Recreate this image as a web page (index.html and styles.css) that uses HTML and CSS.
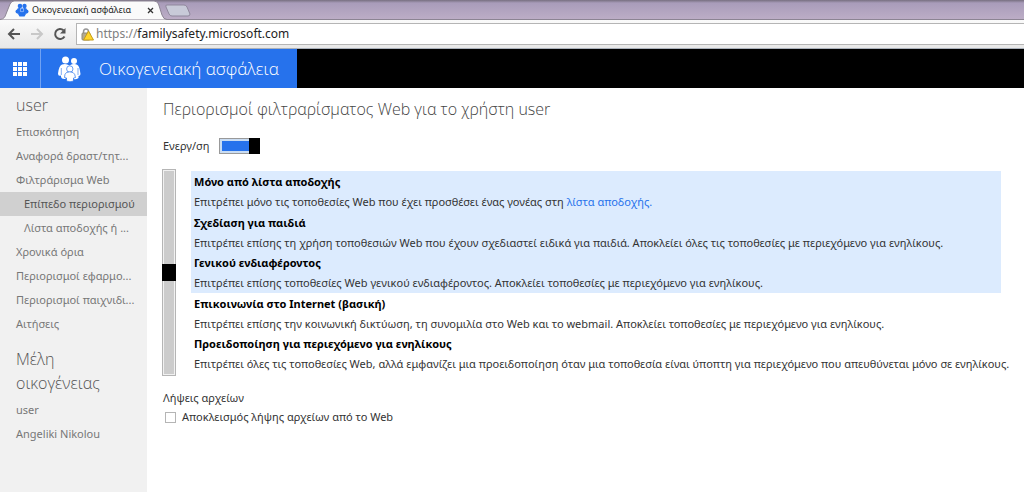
FILE: index.html
```html
<!DOCTYPE html>
<html lang="el">
<head>
<meta charset="utf-8">
<title>Οικογενειακή ασφάλεια</title>
<link rel="stylesheet" href="styles.css">
</head>
<body>
<div class="browser">
  <div class="tabstrip">
    <svg class="tab-shape" width="192" height="20" viewBox="0 0 192 20" aria-hidden="true">
      <path d="M0 19.500C4 19 5 17 6 14L10 4Q11.500 1 14 1H154Q157 1 158.500 4L162 15Q163.500 19.500 167 19.500V20H0Z" fill="#fafafa" stroke="#8c8493"/>
      <path d="M167 5H184Q186 5 187 7L190 14Q190 16 188 16H172Q170 16 169 14L166 7Q165 5 167 5Z" fill="#c8cad8" stroke="#8f879c"/>
    </svg>
    <div class="tab">
      <svg width="14" height="14" viewBox="0 0 14 14" aria-hidden="true" fill="#2672ec">
        <circle cx="5" cy="3" r="2.300"/><circle cx="9.500" cy="3" r="2.200"/>
        <rect x="2" y="5" width="10" height="6" rx="2"/>
        <circle cx="2.500" cy="8.500" r="2"/><circle cx="11.500" cy="8.500" r="2"/>
        <circle cx="7" cy="7" r="2.200" fill="#a9c8ff"/><circle cx="7" cy="7" r="1.500"/>
        <path d="M3 11Q7 8 11 11L9.500 13.500H4.500Z"/>
      </svg>
      <span class="tab-title">Οικογενειακή ασφάλεια</span>
      <button class="tab-close" aria-label="Κλείσιμο">
        <svg width="7" height="7" viewBox="0 0 7 7"><path d="M1 1L6 6M6 1L1 6" stroke="#333" stroke-width="1.300"/></svg>
      </button>
    </div>
  </div>
  <div class="toolbar">
    <button class="nav-button" aria-label="Πίσω">
      <svg width="14" height="12" viewBox="0 0 14 12" fill="none" stroke="#555" stroke-width="2"><path d="M13 6H2M7 1L2 6L7 11"/></svg>
    </button>
    <button class="nav-button" aria-label="Εμπρός">
      <svg width="14" height="12" viewBox="0 0 14 12" fill="none" stroke="#c8c8c8" stroke-width="2"><path d="M1 6H12M7 1L12 6L7 11"/></svg>
    </button>
    <button class="nav-button" aria-label="Ανανέωση">
      <svg width="14" height="14" viewBox="0 0 14 14"><path d="M11.500 9.500A5 5 0 1 1 10.500 3.300" fill="none" stroke="#555" stroke-width="2"/><path d="M12.500 1V6.500H7Z" fill="#555"/></svg>
    </button>
    <div class="address">
      <svg width="13" height="13" viewBox="0 0 13 13" aria-hidden="true">
        <path d="M2.500 6V4Q2.500 1 5 1T7.500 4V6" fill="none" stroke="#969696" stroke-width="1.500"/>
        <rect x="1" y="5" width="8" height="7" rx="1" fill="#b2aa91" stroke="#8d8878"/>
        <path d="M7.500 3L12.500 12H2.500Z" fill="#ffd52a" stroke="#c49c1a" stroke-linejoin="round"/>
      </svg>
      <span class="url"><span class="scheme">https://</span>familysafety.microsoft.com</span>
    </div>
  </div>
</div>
<header class="header">
  <button class="launcher" aria-label="Εφαρμογές">
    <svg width="14" height="14" viewBox="0 0 14 14" fill="#fff"><path d="M0 0h4v4H0zM5 0h4v4H5zM10 0h4v4h-4zM0 5h4v4H0zM5 5h4v4H5zM10 5h4v4h-4zM0 10h4v4H0zM5 10h4v4H5zM10 10h4v4h-4z"/></svg>
  </button>
  <a class="brand" href="#">
    <svg width="24" height="26" viewBox="0 0 24 26" fill="#fff" aria-hidden="true">
      <circle cx="8.500" cy="4" r="3.500"/><circle cx="17" cy="5" r="3"/>
      <path d="M5 8.500Q9 7 12.500 9.500Q17 7 20.500 9Q22.500 10 23.500 18Q23.500 20 21.500 20V22Q19 24 16.500 23L15 19H10L8.500 23Q4.500 23.500 4 21V19.500Q1 20.500 1 17.500Q2 9.500 5 8.500Z"/>
      <g stroke="#2672ec" stroke-width=".7"><circle cx="12.800" cy="13" r="3.200"/><path d="M9.500 16.500Q12.800 15.200 16 16.500Q18 17.500 18.500 21.500L16.500 22V25Q13 26.500 9.500 25V22L7.500 21.500Q7.500 17.500 9.500 16.500Z"/></g>
      <path d="M4.300 12V19M21 12V19" stroke="#2672ec" stroke-width=".6"/>
    </svg>
    <span>Οικογενειακή ασφάλεια</span>
  </a>
</header>
<div class="page">
  <nav class="sidebar">
    <h2 class="group-title">user</h2>
    <ul class="menu">
      <li><a href="#">Επισκόπηση</a></li>
      <li><a href="#">Αναφορά δραστ/τητ...</a></li>
      <li><a href="#">Φιλτράρισμα Web</a></li>
      <li><a class="sub current" href="#" aria-current="page">Επίπεδο περιορισμού</a></li>
      <li><a class="sub" href="#">Λίστα αποδοχής ή ...</a></li>
      <li><a href="#">Χρονικά όρια</a></li>
      <li><a href="#">Περιορισμοί εφαρμο...</a></li>
      <li><a href="#">Περιορισμοί παιχνιδι...</a></li>
      <li><a href="#">Αιτήσεις</a></li>
    </ul>
    <h2 class="group-title">Μέλη οικογένειας</h2>
    <ul class="menu">
      <li><a href="#">user</a></li>
      <li><a href="#">Angeliki Nikolou</a></li>
    </ul>
  </nav>
  <main class="content">
    <h1 class="title">Περιορισμοί φιλτραρίσματος Web για το χρήστη user</h1>
    <div class="enable">
      <label for="enabled">Ενεργ/ση</label>
      <input class="switch" id="enabled" type="checkbox" role="switch" checked>
    </div>
    <div class="restriction">
      <input class="slider" type="range" min="0" max="4" value="2" aria-label="Επίπεδο περιορισμού">
      <div class="levels">
        <section class="level included"><h3>Μόνο από λίστα αποδοχής</h3><p>Επιτρέπει μόνο τις τοποθεσίες Web που έχει προσθέσει ένας γονέας στη <a href="#">λίστα αποδοχής.</a></p></section>
        <section class="level included"><h3>Σχεδίαση για παιδιά</h3><p>Επιτρέπει επίσης τη χρήση τοποθεσιών Web που έχουν σχεδιαστεί ειδικά για παιδιά. Αποκλείει όλες τις τοποθεσίες με περιεχόμενο για ενηλίκους.</p></section>
        <section class="level included"><h3>Γενικού ενδιαφέροντος</h3><p>Επιτρέπει επίσης τοποθεσίες Web γενικού ενδιαφέροντος. Αποκλείει τοποθεσίες με περιεχόμενο για ενηλίκους.</p></section>
        <section class="level"><h3>Επικοινωνία στο Internet (βασική)</h3><p>Επιτρέπει επίσης την κοινωνική δικτύωση, τη συνομιλία στο Web και το webmail. Αποκλείει τοποθεσίες με περιεχόμενο για ενηλίκους.</p></section>
        <section class="level"><h3>Προειδοποίηση για περιεχόμενο για ενηλίκους</h3><p>Επιτρέπει όλες τις τοποθεσίες Web, αλλά εμφανίζει μια προειδοποίηση όταν μια τοποθεσία είναι ύποπτη για περιεχόμενο που απευθύνεται μόνο σε ενηλίκους.</p></section>
      </div>
    </div>
    <h2 class="downloads-title">Λήψεις αρχείων</h2>
    <div class="download">
      <input class="tick" id="block" type="checkbox">
      <label for="block">Αποκλεισμός λήψης αρχείων από το Web</label>
    </div>
  </main>
</div>
</body>
</html>
```
FILE: styles.css
```css
* { box-sizing: border-box; }
body {
  margin: 0;
  min-height: 100vh;
  display: flex;
  flex-direction: column;
  font: 11px/20px "Noto Sans", "Open Sans", sans-serif;
  color: #333;
  background: #fff;
}
h1, h2, h3, p, ul { margin: 0; padding: 0; font-weight: 400; }
ul { list-style: none; }
a { color: inherit; text-decoration: none; }
button { padding: 0; border: 0; background: none; display: flex; align-items: center; justify-content: center; }
svg { flex: none; display: block; }

.tabstrip {
  position: relative;
  height: 20px;
  background: linear-gradient(#776f80, #a99cba 3px, #bcadc6);
  border-bottom: 1px solid #8c8493;
}
.tab-shape { position: absolute; left: 0; top: 0; }
.tab {
  position: relative;
  display: flex;
  align-items: center;
  width: 160px;
  height: 20px;
  padding: 0 5px 0 15px;
  gap: 3px;
  font-size: 9px;
  color: #222;
}
.tab-title { flex: 1; white-space: nowrap; }
.tab-close { width: 9px; height: 9px; }
.toolbar {
  display: flex;
  align-items: center;
  gap: 9px;
  height: 29px;
  padding: 2px 0 2px 7px;
  background: linear-gradient(#fafafa, #e8e8e8);
  border-bottom: 1px solid #a9b0ba;
}
.nav-button { width: 14px; height: 20px; }
.address {
  flex: 1;
  display: flex;
  align-items: center;
  gap: 2px;
  height: 22px;
  padding-left: 4px;
  background: #fff;
  border: 1px solid #b5b5b5;
  border-right: 0;
  font-size: 12px;
  color: #222;
}
.scheme { color: #808080; }

.header { display: flex; height: 39px; background: #000; color: #fff; }
.launcher { width: 41px; background: #2672ec; border-right: 1px solid #70a2f3; }
.brand {
  display: flex;
  align-items: center;
  gap: 18px;
  width: 256px;
  padding-left: 16px;
  background: #2672ec;
  font-family: "Open Sans", "Noto Sans", sans-serif;
  font-size: 17px;
  font-weight: 300;
  white-space: nowrap;
}

.page { flex: 1; display: flex; }
.sidebar { width: 147px; flex: none; padding-top: 5px; background: #f1f1f1; color: #777; }
.group-title {
  padding: 0 16px;
  font-family: "Open Sans", "Noto Sans", sans-serif;
  font-size: 16px;
  line-height: 24px;
  font-weight: 300;
  color: #555;
}
.menu { padding-top: 3px; line-height: 24px; }
.menu + .group-title { padding-top: 11px; }
.menu a { display: block; padding-left: 16px; white-space: nowrap; }
.menu .sub { padding-left: 24px; }
.menu .current { background: #d0d0d0; color: #555; }

.content { flex: 1; min-width: 0; padding: 9px 23px 16px 15px; }
.title {
  padding-left: 1px;
  font-family: "Open Sans", "Noto Sans", sans-serif;
  font-size: 16px;
  line-height: 24px;
  font-weight: 300;
  color: #444;
}
.enable { display: flex; align-items: center; gap: 9px; padding: 15px 0 0 1px; }
.switch {
  appearance: none;
  margin: 0;
  width: 41px;
  height: 16px;
  background:
    linear-gradient(#000, #000) right / 11px 100% no-repeat,
    linear-gradient(#2672ec, #2672ec) 3px center / 27px 10px no-repeat,
    linear-gradient(#c9dcf2, #c9dcf2) center / 39px 14px no-repeat,
    #999;
}
.restriction { display: flex; gap: 15px; padding-top: 13px; }
.slider {
  appearance: none;
  writing-mode: vertical-lr;
  margin: 0;
  width: 14px;
  height: 207px;
  border: 1px solid #b5b5b5;
  background: #ccc;
  box-shadow: inset 0 0 0 1px #f1f1f1;
}
.slider::-webkit-slider-thumb { appearance: none; width: 14px; height: 17px; background: #000; }
.levels {
  flex: 1;
  min-width: 0;
  display: grid;
  grid-template-columns: minmax(0, 1fr);
  grid-template-rows: repeat(5, 1fr);
  padding: 2px 0;
}
.level { padding: 1px 0 0 3px; line-height: 19px; white-space: nowrap; }
.level h3 { font-size: 11px; font-weight: 700; color: #000; line-height: 20px; }
.level a { color: #2672ec; }
.included { background: #dcebfe; }
.downloads-title { padding: 12px 0 0 1px; font-size: 11px; line-height: 20px; }
.download { display: flex; align-items: center; gap: 6px; padding-left: 3px; line-height: 18px; }
.tick { appearance: none; margin: 0; width: 11px; height: 11px; border: 1px solid #b5b5b5; background: #fff; }
```
